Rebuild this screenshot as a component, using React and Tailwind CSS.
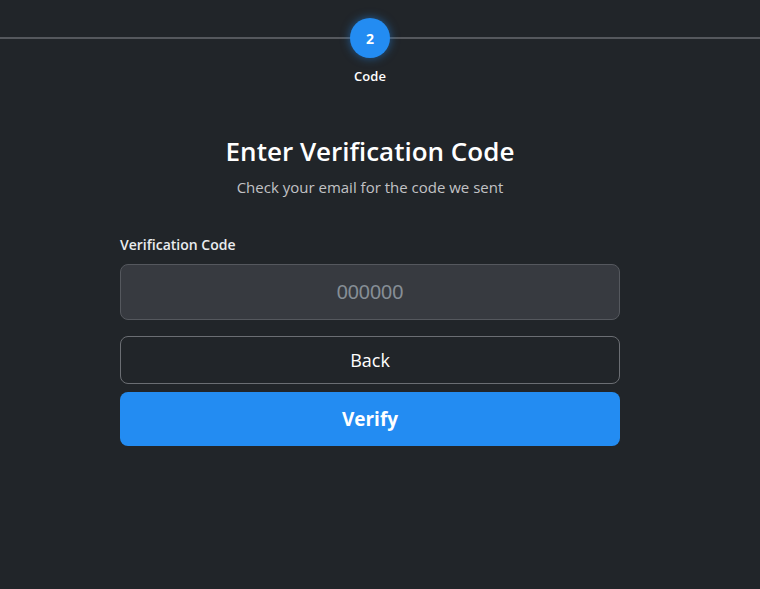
import React from "react";

export default function App() {
  return (
    <div className="min-h-[589px] bg-[#212529] text-white font-['Open_Sans','Noto_Sans',sans-serif]">
      <div className="w-[740px]">
        {/* Stepper */}
        <div className="relative pt-[18px]">
          <div className="absolute left-0 right-[-20px] top-[37px] h-[2px] bg-[#55585d]" />
          <div className="relative flex flex-col items-center">
            <div className="w-10 h-10 rounded-full bg-[#238cf2] shadow-[0_0_10px_rgba(35,140,242,0.55)] flex items-center justify-center text-[14px] font-bold">
              2
            </div>
            <div className="mt-[9px] text-[13px] font-semibold">Code</div>
          </div>
        </div>

        {/* Heading */}
        <div className="mt-[47px] text-center">
          <h1 className="text-[26px] font-semibold leading-[34px]">Enter Verification Code</h1>
          <p className="mt-[8px] text-[15px] text-[#c1c2c5]">Check your email for the code we sent</p>
        </div>

        {/* Form */}
        <div className="mx-auto w-[500px] mt-[36px]">
          <label className="block text-[14px] font-semibold text-[#e9ecef] mb-[9px]">Verification Code</label>
          <input
            placeholder="000000"
            className="w-full h-[56px] rounded-lg bg-[#373a40] border border-[#55585e] text-center text-[20px] font-['Liberation_Sans',sans-serif] placeholder:text-[#868e96] outline-none"
          />
          <button className="mt-4 w-full h-[48px] rounded-lg border border-[#6b6e73] text-[18px]">
            Back
          </button>
          <button className="mt-2 w-full h-[54px] rounded-lg bg-[#238cf2] text-[19px] font-bold">
            Verify
          </button>
        </div>
      </div>
    </div>
  );
}
